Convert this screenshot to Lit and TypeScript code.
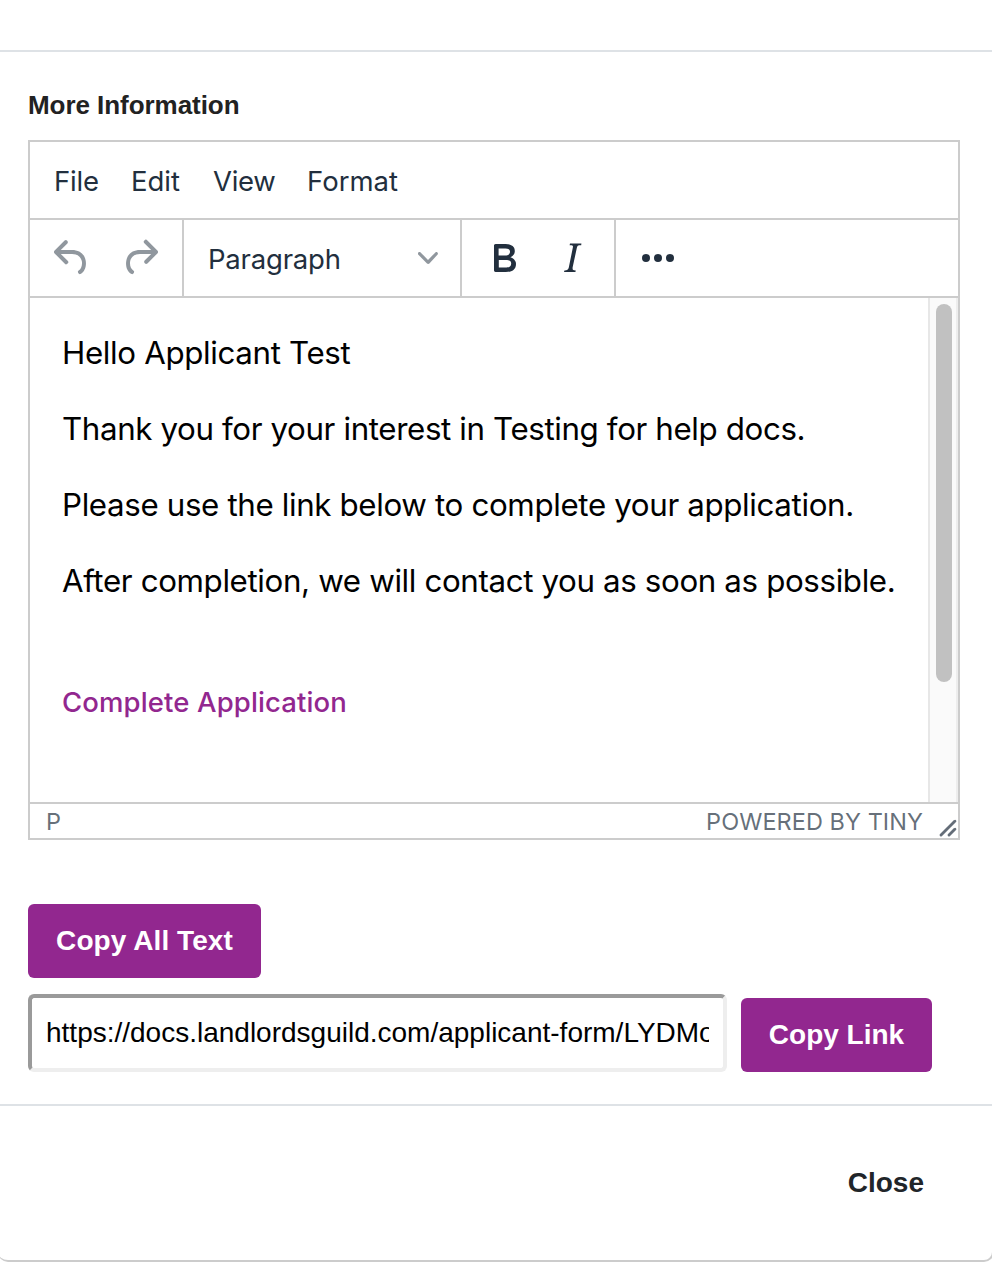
import { LitElement, html, css, svg } from "lit";
import { customElement } from "lit/decorators.js";

const icon = (size: number, box: number, d: string) => html`<svg
  width=${size} height=${size} viewBox="0 0 ${box} ${box}" fill="currentColor">${svg`<path d=${d}></path>`}</svg>`;

const ICONS = {
  undo: "M6.4 8H12c3.7 0 6.2 2 6.8 5.1.6 2.7-.4 5.6-2.3 6.8a1 1 0 0 1-1-1.8c1.1-.6 1.8-2.7 1.4-4.6-.5-2.1-2.1-3.5-4.9-3.5H6.4l3.3 3.3a1 1 0 1 1-1.4 1.4l-5-5a1 1 0 0 1 0-1.4l5-5a1 1 0 0 1 1.4 1.4L6.4 8z",
  redo: "M17.6 10H12c-2.8 0-4.4 1.4-4.9 3.5-.4 2 .3 4 1.4 4.6a1 1 0 1 1-1 1.8c-2-1.2-2.9-4.1-2.3-6.8.6-3 3-5.1 6.8-5.1h5.6l-3.3-3.3a1 1 0 1 1 1.4-1.4l5 5a1 1 0 0 1 0 1.4l-5 5a1 1 0 0 1-1.4-1.4l3.3-3.3z",
  bold: "M7.8 19c-.3 0-.5 0-.6-.2l-.2-.5V5.7c0-.2 0-.4.2-.5l.6-.2h5c1.5 0 2.7.3 3.5 1 .7.6 1.1 1.4 1.1 2.5a3 3 0 0 1-.6 1.9c-.4.6-1 1-1.6 1.2.4.1.9.3 1.3.6s.8.7 1 1.2c.4.4.5 1 .5 1.6 0 1.3-.4 2.3-1.3 3-.8.7-2.1 1-3.8 1H7.8zm5-8.3c.6 0 1.2-.1 1.6-.5.4-.3.6-.7.6-1.3 0-1.1-.8-1.7-2.3-1.7H9.3v3.5h3.4zm.5 6c.7 0 1.3-.1 1.7-.4.4-.4.6-.9.6-1.5s-.2-1-.7-1.4c-.4-.3-1-.4-2-.4H9.4v3.8h4z",
  italic: "M16.7 4.7l-.1.9h-.3c-.6 0-1 0-1.4.3-.3.3-.4.6-.5 1.1l-2.1 9.8v.6c0 .5.4.8 1.4.8h.2l-.2.8H8l.2-.8h.2c1.1 0 1.8-.5 2-1.5l2-9.8.1-.5c0-.6-.4-.8-1.4-.8h-.3l.2-.9h5.8z",
  more: "M6 10a2 2 0 1 0 0 4 2 2 0 0 0 0-4zm12 0a2 2 0 1 0 0 4 2 2 0 0 0 0-4zm-6 0a2 2 0 1 0 0 4 2 2 0 0 0 0-4z",
  chevron: "M8.7 2.2c.3-.3.8-.3 1 0 .4.4.4.9 0 1.2L5.7 7.8c-.3.3-.9.3-1.2 0L.2 3.4a.8.8 0 0 1 0-1.2c.3-.3.8-.3 1.1 0L5 6l3.7-3.8z",
  resize: "M8.1 1.1A.5.5 0 1 1 9 2l-7 7A.5.5 0 1 1 1 8l7-7zM8.1 5.1A.5.5 0 1 1 9 6l-3 3A.5.5 0 1 1 5 8l3-3z",
};

@customElement("rich-editor")
class RichEditor extends LitElement {
  static styles = css`
    :host { display: block; box-sizing: border-box; height: 700px; border: 2px solid #ccc; color: #222f3e;
      font-family: Inter, sans-serif; }
    svg { display: block; flex: none; }
    .menubar { display: flex; height: 76px; padding-left: 24px; gap: 32px; border-bottom: 2px solid #ccc;
      font-size: 27.5px; line-height: 78px; }
    .file { letter-spacing: -0.15px; width: 45px; }
    .edit { width: 50px; }
    .view { letter-spacing: -0.3px; width: 62px; }
    .toolbar { display: flex; height: 76px; border-bottom: 2px solid #ccc; }
    .group { display: flex; padding: 0 8px; border-right: 2px solid #ccc; }
    .group:last-child { border-right: 0; }
    .tool { display: flex; width: 68px; align-items: center; justify-content: center; }
    .off { color: #222f3e80; }
    .select { display: flex; box-sizing: border-box; width: 278px; padding: 0 22px 0 24px; align-items: center;
      justify-content: space-between; border-right: 2px solid #ccc; font-size: 27.5px; }
    .para { padding-top: 2px; letter-spacing: -0.2px; }
    .body { display: flex; height: 504px; border-bottom: 2px solid #ccc; }
    .content { flex: 1; padding: 33px 0 0 32px; color: #000; font-size: 31.3px; line-height: 44px; white-space: nowrap; }
    .content p { margin: 0 0 32px; }
    .l1 { letter-spacing: -0.35px; }
    .l2 { letter-spacing: -0.38px; }
    .l3 { letter-spacing: -0.36px; }
    .l4 { letter-spacing: -0.37px; }
    .link { margin-top: 77px; display: block; color: #92278f; font-size: 27.5px; font-weight: 500; line-height: 44px;
      letter-spacing: 0.13px; }
    .track { box-sizing: border-box; width: 30px; padding: 6px 6px 0; background: #fafafa;
      border-left: 2px solid #e7e7e7; border-right: 2px solid #ededed; }
    .thumb { width: 16px; height: 378px; border-radius: 8px; background: #c1c1c1; }
    .status { display: flex; height: 34px; padding: 0 0 0 16px; color: #222f3eb3; font-size: 23.5px; line-height: 35px; }
    .brand { margin-left: auto; margin-right: 15px; letter-spacing: 0.05px; }
    .grip { align-self: flex-end; }
  `;
  render() {
    return html`
      <div class="menubar">
        <span class="file">File</span><span class="edit">Edit</span><span class="view">View</span><span class="format">Format</span>
      </div>
      <div class="toolbar">
        <div class="group off"><span class="tool">${icon(48, 24, ICONS.undo)}</span><span class="tool">${icon(48, 24, ICONS.redo)}</span></div>
        <div class="select"><span class="para">Paragraph</span><span class="off">${icon(20, 10, ICONS.chevron)}</span></div>
        <div class="group"><span class="tool">${icon(48, 24, ICONS.bold)}</span><span class="tool">${icon(48, 24, ICONS.italic)}</span></div>
        <div class="group"><span class="tool">${icon(48, 24, ICONS.more)}</span></div>
      </div>
      <div class="body">
        <div class="content">
          <p><span class="l1">Hello Applicant Test</span></p>
          <p><span class="l2">Thank you for your interest in Testing for help docs.</span></p>
          <p><span class="l3">Please use the link below to complete your application.</span></p>
          <p><span class="l4">After completion, we will contact you as soon as possible.</span></p>
          <span class="link">Complete Application</span>
        </div>
        <div class="track"><div class="thumb"></div></div>
      </div>
      <div class="status"><span class="path">P</span><span class="brand">POWERED BY TINY</span><span class="grip">${icon(20, 10, ICONS.resize)}</span></div>
    `;
  }
}

@customElement("app-root")
class AppRoot extends LitElement {
  static styles = css`
    :host { display: block; height: 1264px; overflow: hidden; background: #fff;
      font-family: "Liberation Sans", Arial, sans-serif; }
    .modal { box-sizing: border-box; height: 1262px; margin: 0 -2px; padding-left: 2px; border-bottom: 2px solid #ccc;
      border-right: 2px solid #ccc; border-radius: 0 0 10px 10px; }
    .head { height: 50px; border-bottom: 2px solid #dee2e6; }
    .main { box-sizing: border-box; height: 1052px; padding: 36px 32px 0 28px; }
    .title { font-size: 26px; font-weight: 700; line-height: 34px; color: #222; margin-bottom: 18px; letter-spacing: -0.05px; }
    .btn { display: flex; box-sizing: border-box; height: 74px; align-items: center; justify-content: center;
      border-radius: 6px; background: #92278f; color: #fff; font-size: 28px; font-weight: 700; white-space: nowrap; }
    .all { width: 233px; margin-top: 64px; letter-spacing: 0.08px; }
    .row { display: flex; margin-top: 16px; gap: 14px; }
    .url { box-sizing: border-box; width: 699px; height: 78px; padding: 0 14px; border: 4px solid;
      border-color: #9a9a9a #eee #eee #9a9a9a; border-radius: 6px; color: #000; font-size: 28px; line-height: 70px; }
    .clip { overflow: hidden; white-space: nowrap; }
    .copy { width: 191px; margin-top: 4px; }
    .foot { display: flex; justify-content: flex-end; padding: 60px 68px 0 0; border-top: 2px solid #dee2e6;
      color: #212529; font-size: 28px; font-weight: 700; line-height: 34px; }
  `;
  render() {
    return html`
      <div class="modal">
        <div class="head"></div>
        <div class="main">
          <div class="title">More Information</div>
          <rich-editor></rich-editor>
          <div class="btn all">Copy All Text</div>
          <div class="row">
            <div class="url"><div class="clip">https://docs.landlordsguild.com/applicant-form/LYDMo</div></div>
            <div class="btn copy">Copy Link</div>
          </div>
        </div>
        <div class="foot">Close</div>
      </div>
    `;
  }
}
